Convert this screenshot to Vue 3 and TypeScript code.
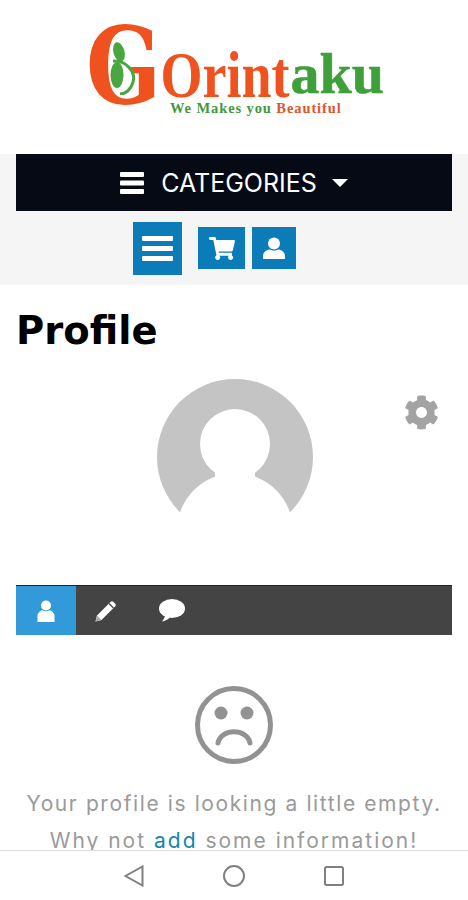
<template>
  <div class="screen">
    <header class="logo-area">
      <div class="logo">
        <div class="logo-word">
          <span class="big-g">G</span>
          <svg class="figure" viewBox="0 0 28 55">
            <ellipse cx="11" cy="12" rx="5.500" ry="10" transform="rotate(-15 11 12)" fill="#4aa640" />
            <ellipse cx="9" cy="35" rx="6.500" ry="13" fill="#4aa640" />
            <path d="M5 21C18 20 28 32 25 42 23 50 17 54 12 54" fill="none" stroke="#4aa640" stroke-width="3" />
          </svg>
          <span class="orint">Orint</span>
          <span class="aku">aku</span>
        </div>
        <div class="tagline">We Makes you <span class="tag-accent">Beautiful</span></div>
      </div>
    </header>

    <nav class="top-nav">
      <div class="categories">
        <svg class="cat-bars" viewBox="0 0 24 22">
          <rect width="24" height="5" rx="1" y="0" />
          <rect width="24" height="5" rx="1" y="8.500" />
          <rect width="24" height="5" rx="1" y="17" />
        </svg>
        <span class="cat-label">CATEGORIES</span>
        <span class="caret"></span>
      </div>
      <div class="nav-buttons">
        <button class="nav-btn menu-btn" type="button">
          <svg width="31" height="25" viewBox="0 0 31 25">
            <rect width="31" height="5" rx="1" y="0" />
            <rect width="31" height="5" rx="1" y="10" />
            <rect width="31" height="5" rx="1" y="20" />
          </svg>
        </button>
        <button class="nav-btn cart-btn" type="button">
          <svg width="26" height="23" viewBox="0 0 576 512">
            <path d="M528.12 301.319l47.273-208C578.806 78.301 567.391 64 551.99 64H159.208l-9.166-44.81C147.758 8.021 137.93 0 126.529 0H24C10.745 0 0 10.745 0 24v16c0 13.255 10.745 24 24 24h69.883l70.248 343.435C147.325 417.1 136 435.222 136 456c0 30.928 25.072 56 56 56s56-25.072 56-56c0-15.674-6.447-29.835-16.824-40h209.647C430.447 426.165 424 440.326 424 456c0 30.928 25.072 56 56 56s56-25.072 56-56c0-22.172-12.888-41.332-31.579-50.405l5.517-24.276c3.413-15.018-8.002-29.319-23.403-29.319H218.117l-6.545-32h293.145c11.206 0 20.92-7.754 23.403-18.681z" />
          </svg>
        </button>
        <button class="nav-btn user-btn" type="button">
          <svg width="24" height="24" viewBox="0 0 24 24">
            <circle cx="12" cy="7.500" r="6" />
            <path d="M1 23v-3c0-4 4-6.500 7-6.500 2 1.500 6 1.500 8 0 3 0 7 2.500 7 6.500v3z" />
          </svg>
        </button>
      </div>
    </nav>

    <main class="content">
      <h1 class="title">Profile</h1>
      <section class="profile-head">
        <svg class="avatar" width="156" height="156" viewBox="0 0 156 156">
          <circle cx="78" cy="78" r="78" fill="#c4c4c4" />
          <circle cx="78" cy="65" r="35" fill="#fff" />
          <circle cx="78" cy="152" r="58" fill="#fff" />
          <rect x="58" y="85" width="40" height="16" fill="#fff" />
        </svg>
        <svg class="gear" width="35" height="35" viewBox="0 0 512 512">
          <path d="M487.4 315.7l-42.6-24.6c4.3-23.2 4.3-47 0-70.2l42.6-24.6c4.9-2.8 7.1-8.6 5.5-14-11.1-35.6-30-67.8-54.7-94.6-3.8-4.1-10-5.1-14.8-2.3L380.8 110c-17.9-15.4-38.5-27.3-60.8-35.1V25.800c0-5.600-3.900-10.500-9.400-11.700-36.700-8.200-74.300-7.800-109.200 0-5.500 1.200-9.400 6.100-9.400 11.700V75c-22.200 7.900-42.800 19.800-60.800 35.100L88.700 85.500c-4.900-2.800-11-1.900-14.800 2.300-24.700 26.700-43.600 58.900-54.700 94.600-1.700 5.400.6 11.200 5.500 14L67.300 221c-4.300 23.200-4.300 47 0 70.200l-42.600 24.600c-4.900 2.800-7.100 8.600-5.500 14 11.100 35.600 30 67.800 54.700 94.600 3.800 4.100 10 5.100 14.800 2.300l42.600-24.600c17.900 15.400 38.500 27.300 60.800 35.100v49.200c0 5.600 3.900 10.500 9.400 11.700 36.700 8.200 74.300 7.800 109.200 0 5.500-1.200 9.400-6.100 9.400-11.700v-49.200c22.200-7.900 42.800-19.800 60.800-35.100l42.600 24.600c4.900 2.800 11 1.900 14.800-2.300 24.700-26.700 43.600-58.900 54.700-94.600 1.500-5.500-.7-11.300-5.600-14.100zM256 336c-44.100 0-80-35.900-80-80s35.900-80 80-80 80 35.900 80 80-35.900 80-80 80z" />
        </svg>
      </section>

      <div class="tabs">
        <div class="tab active">
          <svg width="18" height="22" viewBox="0 0 18 22">
            <circle cx="9" cy="5.500" r="5" />
            <path d="M0.500 22v-6c0-3 3-5.500 5-5.700 2 1.200 5 1.200 7 0 2 .2 5 2.700 5 5.700v6z" />
          </svg>
        </div>
        <div class="tab">
          <svg width="24" height="24" viewBox="0 0 24 24">
            <path d="M1.500 22.500l1.500-6L16.500 3c1-1 2-1 3 0l1.500 1.500c1 1 1 2 0 3L7.500 21z" />
            <path d="M1.500 22.500l1.500-6 4.500 4.500z" fill="#aaa" />
            <path d="M15 4.500l4.500 4.500" stroke="#444" stroke-width="1.300" fill="none" />
          </svg>
        </div>
        <div class="tab">
          <svg width="26" height="23" viewBox="0 0 26 23">
            <ellipse cx="13" cy="9.500" rx="13" ry="9.500" />
            <path d="M6 16c0 2-1 4-3 6.500 3-.5 6-2 8.500-4.500z" />
          </svg>
        </div>
      </div>

      <section class="empty">
        <svg class="sad" width="80" height="80" viewBox="0 0 80 80">
          <circle cx="40" cy="40" r="36.500" fill="none" stroke="#929292" stroke-width="5" />
          <circle cx="27" cy="28" r="6.500" fill="#929292" />
          <circle cx="53" cy="28" r="6.500" fill="#929292" />
          <path d="M24 58C27 43 53 43 56 58" fill="none" stroke="#929292" stroke-width="5" stroke-linecap="round" />
        </svg>
        <p class="empty-text">Your profile is looking a little empty.</p>
        <p class="empty-text wide">Why not <a class="add-link">add</a> some information!</p>
      </section>
    </main>

    <footer class="system-bar">
      <svg width="20" height="22" viewBox="0 0 20 22">
        <path d="M18.500 1.500v19L1.500 11z" />
      </svg>
      <svg width="22" height="22" viewBox="0 0 22 22">
        <circle cx="11" cy="11" r="10" />
      </svg>
      <svg width="20" height="20" viewBox="0 0 20 20">
        <rect x="1" y="1" width="18" height="18" rx="1.500" />
      </svg>
    </footer>
  </div>
</template>

<script setup lang="ts">
</script>

<style>
html,
body {
  margin: 0;
  background: #fff;
}
</style>

<style scoped>
.screen {
  position: relative;
  width: 468px;
  height: 900px;
  overflow: hidden;
  background: #fff;
  font-family: Inter, "Open Sans", sans-serif;
}

.logo-area {
  height: 154px;
  display: flex;
  justify-content: center;
  box-sizing: border-box;
  padding-top: 17px;
}

.logo {
  width: 296px;
  font-family: "Liberation Serif", serif;
  font-weight: 700;
}

.logo-word {
  position: relative;
  display: flex;
  align-items: baseline;
  height: 84px;
}

.big-g {
  display: inline-block;
  font-family: "DejaVu Serif", serif;
  font-size: 106px;
  line-height: 84px;
  color: #f0521f;
  margin-right: -16px;
  transform: translateY(7px) scaleX(0.83);
  transform-origin: left center;
}

.figure {
  position: absolute;
  left: 22px;
  top: 23px;
  width: 28px;
  height: 55px;
}

.orint {
  display: inline-block;
  font-size: 54px;
  line-height: 84px;
  color: #f0521f;
  transform: translateY(6px) scaleY(1.2);
  transform-origin: left bottom;
}

.aku {
  font-size: 58px;
  line-height: 84px;
  color: #3f9f3a;
  -webkit-text-stroke: 0.6px #3f9f3a;
  transform: translateY(-3px);
  margin-left: 1px;
}

.tagline {
  margin: -1px 0 0 84px;
  font-size: 14.500px;
  line-height: 16px;
  letter-spacing: 0.9px;
  color: #3f9a3c;
  white-space: nowrap;
}

.tag-accent {
  color: #e2552c;
}

.top-nav {
  background: #f5f5f5;
  height: 131px;
  box-sizing: border-box;
  padding: 0 16px;
}

.categories {
  height: 57px;
  background: #060a14;
  color: #fff;
  display: flex;
  align-items: center;
  justify-content: center;
  box-sizing: border-box;
}

.cat-bars {
  width: 24px;
  height: 22px;
  fill: #fff;
  margin-right: 17px;
}

.cat-label {
  font-size: 25px;
  letter-spacing: 0;
}

.caret {
  width: 0;
  height: 0;
  margin-left: 15px;
  border-left: 8px solid transparent;
  border-right: 8px solid transparent;
  border-top: 8px solid #fff;
}

.nav-buttons {
  display: flex;
  align-items: flex-start;
  height: 53px;
  margin: 11px 0 0 117px;
}

.nav-btn {
  display: flex;
  align-items: center;
  justify-content: center;
  border: none;
  padding: 0;
  background: #0b7cb8;
  fill: #fff;
}

.menu-btn {
  width: 49px;
  height: 53px;
  margin-right: 16px;
}

.cart-btn {
  width: 47px;
  height: 42px;
  margin: 5px 7px 0 0;
}

.user-btn {
  width: 44px;
  height: 42px;
  margin-top: 5px;
}

.content {
  padding: 0 16px;
}

.title {
  margin: 26px 0 0;
  font-family: "DejaVu Sans", sans-serif;
  font-size: 38.500px;
  line-height: 40px;
  font-weight: 700;
  color: #000;
}

.profile-head {
  display: flex;
  height: 206px;
  margin-top: 28px;
}

.avatar {
  margin-left: 141px;
  flex: none;
}

.gear {
  fill: #a3a3a3;
  margin: 16px 0 0 91px;
  flex: none;
}

.tabs {
  display: flex;
  height: 50px;
  background: #444;
  border-top: 1px solid #222;
  box-sizing: border-box;
  fill: #fff;
}

.tab {
  width: 60px;
  display: flex;
  align-items: center;
  justify-content: center;
}

.tab.active {
  background: #329ad9;
}

.tab + .tab + .tab {
  margin-left: 6px;
}

.empty {
  display: flex;
  flex-direction: column;
  align-items: center;
  margin: 50px -16px 0;
}

.sad {
  margin-bottom: 20px;
}

.empty-text {
  margin: 0;
  font-size: 21px;
  line-height: 37px;
  letter-spacing: 1.600px;
  color: #9a9a9a;
  white-space: nowrap;
}

.empty-text.wide {
  letter-spacing: 2px;
}

.add-link {
  color: #1784ad;
}

.system-bar {
  position: absolute;
  left: 0;
  right: 0;
  bottom: 0;
  height: 50px;
  border-top: 1px solid #ddd;
  background: #fff;
  box-sizing: border-box;
  display: flex;
  align-items: center;
  justify-content: center;
  gap: 79px;
  fill: none;
  stroke: #808080;
  stroke-width: 2px;
}
</style>
